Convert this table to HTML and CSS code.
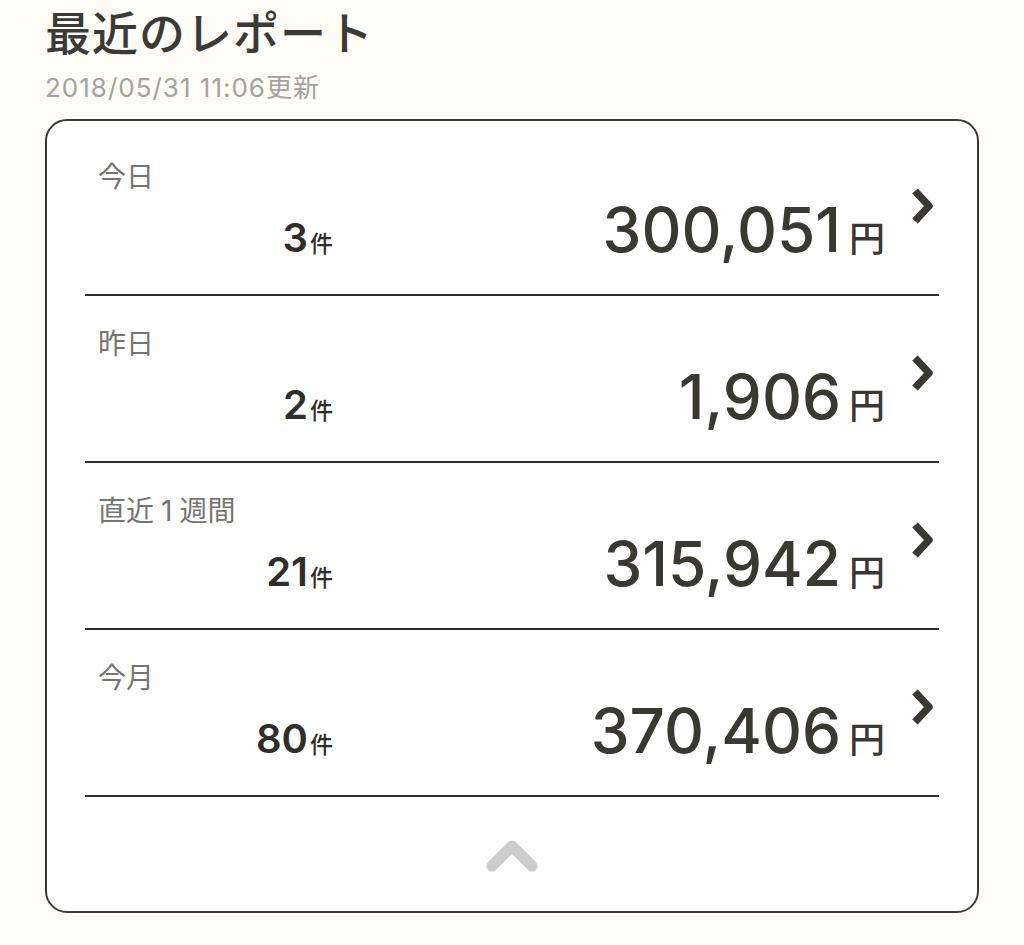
FILE: index.html
```html
<!DOCTYPE html>
<html lang="ja">
<head>
<meta charset="utf-8">
<title>最近のレポート</title>
<link rel="stylesheet" href="styles.css">
</head>
<body>
<main class="page">
  <h1 class="title">最近のレポート</h1>
  <p class="updated">2018/05/31 11:06更新</p>
  <section class="card">
    <a class="row" href="#">
      <div class="label">今日</div>
      <div class="values">
        <div class="count">3<span class="unit-s">件</span></div>
        <div class="amount">300,051<span class="unit-m">円</span></div>
        <div class="chev"><svg width="28" height="42" viewBox="0 0 28 42"><polyline points="6,5 20,20 6,35" fill="none" stroke="#3a3833" stroke-width="7.5" stroke-linejoin="round"/></svg></div>
      </div>
    </a>
    <a class="row" href="#">
      <div class="label">昨日</div>
      <div class="values">
        <div class="count">2<span class="unit-s">件</span></div>
        <div class="amount">1,906<span class="unit-m">円</span></div>
        <div class="chev"><svg width="28" height="42" viewBox="0 0 28 42"><polyline points="6,5 20,20 6,35" fill="none" stroke="#3a3833" stroke-width="7.5" stroke-linejoin="round"/></svg></div>
      </div>
    </a>
    <a class="row" href="#">
      <div class="label">直近<span class="num">1</span>週間</div>
      <div class="values">
        <div class="count">21<span class="unit-s">件</span></div>
        <div class="amount">315,942<span class="unit-m">円</span></div>
        <div class="chev"><svg width="28" height="42" viewBox="0 0 28 42"><polyline points="6,5 20,20 6,35" fill="none" stroke="#3a3833" stroke-width="7.5" stroke-linejoin="round"/></svg></div>
      </div>
    </a>
    <a class="row" href="#">
      <div class="label">今月</div>
      <div class="values">
        <div class="count">80<span class="unit-s">件</span></div>
        <div class="amount">370,406<span class="unit-m">円</span></div>
        <div class="chev"><svg width="28" height="42" viewBox="0 0 28 42"><polyline points="6,5 20,20 6,35" fill="none" stroke="#3a3833" stroke-width="7.5" stroke-linejoin="round"/></svg></div>
      </div>
    </a>
    <div class="collapse">
      <svg width="52" height="38" viewBox="0 0 52 38"><polyline points="6,30 26,10 46,30" fill="none" stroke="#cccccc" stroke-width="11" stroke-linejoin="round" stroke-linecap="round"/></svg>
    </div>
  </section>
</main>
</body>
</html>
```

FILE: styles.css
```css
* { box-sizing: border-box; }

html, body {
  margin: 0;
  padding: 0;
  background: #fdfcf7;
}

body {
  font-family: Inter, "Noto Sans CJK JP", sans-serif;
  color: #3a3833;
}

.page {
  padding: 7px 45px 0;
}

.title {
  margin: 0;
  font-size: 46px;
  line-height: 53px;
  font-weight: 500;
  letter-spacing: 1px;
  color: #3a3a36;
}

.updated {
  margin: 11px 0 0;
  font-size: 26px;
  line-height: 34px;
  letter-spacing: 1px;
  color: #a3a3a0;
}

.card {
  margin-top: 14px;
  background: #ffffff;
  border: 2px solid #3a3a36;
  border-radius: 22px;
  padding: 8px 38px 0;
}

.row {
  display: block;
  height: 167px;
  border-bottom: 2px solid #2e2e2b;
  padding-top: 30px;
  text-decoration: none;
  color: inherit;
}

.label {
  padding-left: 13px;
  font-size: 28px;
  line-height: 36px;
  color: #757572;
}

.label .num {
  margin: 0 7px 0 7px;
}

.values {
  display: flex;
  align-items: baseline;
  height: 59px;
  margin-top: 5px;
}

.count {
  width: 248px;
  flex: none;
  text-align: right;
  font-size: 40px;
  line-height: 59px;
  font-weight: 600;
  color: #2f2e2b;
}

.unit-s {
  font-size: 23px;
  font-weight: 500;
  margin-left: 2px;
}

.amount {
  flex: 1;
  text-align: right;
  font-size: 62px;
  line-height: 59px;
  font-weight: 500;
  color: #3a3833;
}

.unit-m {
  font-size: 36px;
  margin-left: 8px;
}

.chev {
  width: 54px;
  flex: none;
  align-self: flex-start;
  padding-left: 24px;
  margin-top: -14px;
}

.chev svg { display: block; }

.collapse {
  height: 114px;
  display: flex;
  align-items: center;
  justify-content: center;
}

.collapse svg { display: block; margin-top: 2px; }
```
